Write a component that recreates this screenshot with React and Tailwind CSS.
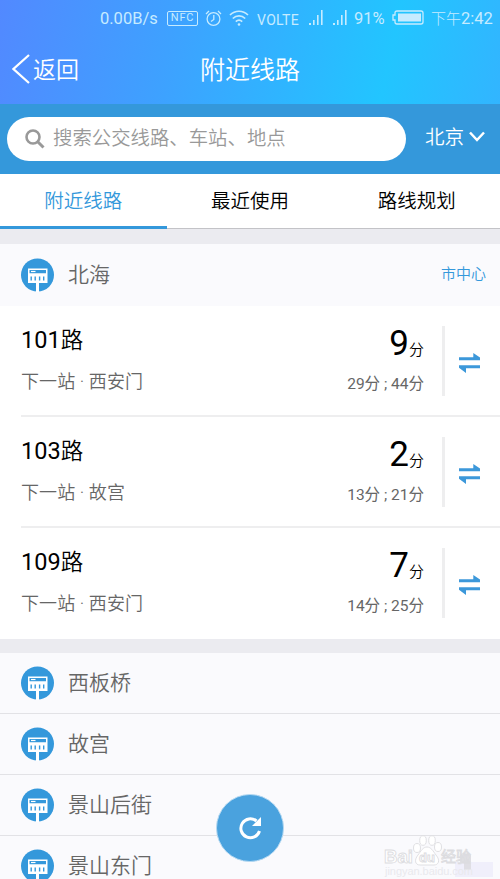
const lines = [
  { number: "101", next: "西安门", minutes: "9", later: "29分 ; 44分" },
  { number: "103", next: "故宫", minutes: "2", later: "13分 ; 21分" },
  { number: "109", next: "西安门", minutes: "7", later: "14分 ; 25分" },
];

const stops = ["西板桥", "故宫", "景山后街", "景山东门"];

function Signal({ className }) {
  return (
    <svg className={className} width="14" height="17" viewBox="0 0 14 17" fill="currentColor">
      <path d="M0 14h2v2H0zM4 11h1.6v5H4zM8 6h1.6v10H8zM12 1h1.6v15H12z" />
    </svg>
  );
}

function StatusBar() {
  return (
    <div className="flex h-9 items-center pl-[100px] font-[Roboto,'Noto_Sans_CJK_SC',sans-serif] text-[#c6ebff]">
      <span className="w-[67px] shrink-0 pt-0.5 text-[16.5px]">0.00B/s</span>
      <span className="flex h-[15px] w-[31px] shrink-0 items-center justify-center rounded-[2px] border border-current text-[11px] tracking-[0.8px]">NFC</span>
      <svg className="ml-[7px] shrink-0" width="17" height="17" viewBox="0 0 17 17" fill="none" stroke="currentColor" strokeWidth="1.3">
        <circle cx="8.5" cy="9" r="6.4" />
        <path d="M8.8 5v4.5L6 11.5M1 4l3-3M16 4l-3-3" />
      </svg>
      <svg className="ml-[7px] shrink-0" width="20" height="17" viewBox="0 0 20 17" fill="none" stroke="currentColor" strokeWidth="1.7">
        <path d="M1 5c5-5 13-5 18 0M3.8 8.5c3.6-3.6 8.8-3.6 12.4 0M6.8 11.7c2-2 4.4-2 6.4 0" />
        <circle cx="10" cy="14.5" r="1.3" fill="currentColor" stroke="none" />
      </svg>
      <span className="ml-2 mt-1 w-[52px] shrink-0 text-[14px] tracking-[0.3px]">VOLTE</span>
      <Signal className="mb-0.5 shrink-0" />
      <Signal className="mb-0.5 ml-[10px] shrink-0" />
      <span className="ml-[7px] w-[38px] shrink-0 pt-0.5 text-[16.5px]">91%</span>
      <svg className="mb-0.5 shrink-0" width="32" height="15" viewBox="0 0 32 15">
        <path d="M5 1h24q2 0 2 2v9q0 2-2 2H5q-2 0-2-2v-2H1V5h2V3q0-2 2-2z" fill="none" stroke="currentColor" strokeWidth="1.3" />
        <path d="M6 3.5h23v8H6z" fill="currentColor" />
      </svg>
      <span className="ml-[7px] shrink-0 whitespace-nowrap pt-0.5 text-[15px] font-light">下午<span className="text-[16.5px] font-normal">2:42</span></span>
    </div>
  );
}

function StopIcon() {
  return (
    <svg className="shrink-0" width="33" height="34" viewBox="0 0 33 34">
      <circle cx="16.5" cy="17" r="16.5" fill="#3498db" />
      <path d="M7 10.5h19.5V25H18v9h-3v-9H7z" fill="#fff" />
      <path d="M8.5 12H25v3.2H8.5zM9.5 18.5h1.4v4H9.5zM13.5 18.5h1.4v4h-1.4zM17.9 18.5h1.4v4h-1.4zM22 18.5h1.4v4H22z" fill="#3498db" />
      <path d="M10 12.9h4.5v1.2H10z" fill="#fff" />
    </svg>
  );
}

function LineRow({ line, last }) {
  return (
    <div className={last ? "ml-[21px] flex h-[111px] justify-between" : "ml-[21px] flex h-[111px] justify-between border-b-2 border-[#eeeeef]"}>
      <div className="font-[Roboto,'Noto_Sans_CJK_SC',sans-serif]">
        <div className="mt-[16px] text-[23.5px] leading-[36px] text-black">
          {line.number}<span className="text-[22.5px] font-[350]">路</span>
        </div>
        <div className="mt-[10px] text-[18px] font-[350] leading-[28px] tracking-[0.1px] text-[#666]">下一站 · {line.next}</div>
      </div>
      <div className="flex font-[Roboto,'Noto_Sans_CJK_SC',sans-serif]">
        <div className="text-right">
          <div className="mt-[16px] flex h-[44px] items-baseline justify-end text-black">
            <span className="text-[35px] leading-[44px]">{line.minutes}</span>
            <span className="text-[15px] font-[350]">分</span>
          </div>
          <div className="mt-[4px] text-[15.5px] leading-[28px] text-[#666]">{line.later}</div>
        </div>
        <div className="ml-[18px] mt-5 h-[70px] w-[3px] bg-[#eeeeef]" />
        <svg className="ml-[14px] mr-[19px] mt-[47px]" width="22" height="20" viewBox="0 0 22 20" fill="#3c98da">
          <path d="M0 4.2h14.3V0L21 4.500v2.700H0zM21 12.300v2.900H7V20L0 14.800v-2.500z" />
        </svg>
      </div>
    </div>
  );
}

function Watermark() {
  return (
    <div className="absolute left-[383px] top-[833px] h-[46px] w-[117px] font-['Liberation_Sans','Noto_Sans_CJK_SC',sans-serif]">
      <svg width="117" height="46" viewBox="0 0 117 46">
        <path d="M72 29h38v15H72z" fill="#f0effb" />
        <path d="M77 22h11v15h-7v-7h-4z" fill="#dfdee4" />
        <g fill="#fff" stroke="#dcdce0" strokeWidth="0.9">
          <text x="1" y="30" fontSize="19" fontWeight="bold" textLength="29" lengthAdjust="spacingAndGlyphs">Bai</text>
          <path d="M35 22c3-4 5-8 9-8s6 4 9 8c5 6 2 10-2 10H37c-5 0-6-5-2-10z" />
          <ellipse cx="34" cy="15" rx="3.5" ry="4.5" />
          <ellipse cx="40" cy="7.5" rx="3.3" ry="4.8" />
          <ellipse cx="49" cy="7.5" rx="3.3" ry="4.8" />
          <ellipse cx="55" cy="14" rx="3.5" ry="4.5" />
          <text x="36" y="29" fontSize="13" fontWeight="bold">du</text>
          <text x="58" y="29" fontSize="15">经验</text>
        </g>
        <text x="2" y="42" fontSize="11" fill="#e9e9ed" textLength="88">jingyan.baidu.com</text>
      </svg>
    </div>
  );
}

export default function App() {
  return (
    <div className="relative h-[879px] w-[500px] overflow-hidden bg-white font-['Noto_Sans_CJK_SC',sans-serif]">
      <div className="h-[104px] bg-linear-[102deg,#5289ff_0%,#3ea1ff_34%,#22c5ff_77%,#32b5ff_100%] text-white">
        <StatusBar />
        <div className="grid h-[68px] grid-cols-3 items-center pb-0.5">
          <div className="flex items-center pl-3 text-[23px] font-[350] leading-none">
            <svg width="18" height="30" viewBox="0 0 18 30" fill="none" stroke="currentColor" strokeWidth="2.2">
              <path d="M17 1 1.5 15 17 29" />
            </svg>
            <span className="ml-[3px] pb-0.5">返回</span>
          </div>
          <h1 className="pb-px text-center text-[25px] font-[350] leading-none">附近线路</h1>
        </div>
      </div>

      <div className="flex h-[70px] items-center bg-[#3498db] text-white">
        <div className="ml-[7px] flex h-[44px] w-[399px] items-center rounded-full bg-white pl-[18px] text-[#999]">
          <svg width="20" height="20" viewBox="0 0 20 20" fill="none" stroke="currentColor" strokeWidth="2.6">
            <circle cx="8" cy="8" r="6.5" />
            <path d="m12.5 12.5 6 6" strokeWidth="3" />
          </svg>
          <span className="ml-2 pb-1 text-[19.4px] font-[350] leading-none">搜索公交线路、车站、地点</span>
        </div>
        <span className="ml-[19px] pb-1.5 text-[19.5px] font-[350] leading-none">北京</span>
        <svg className="mb-1.5 ml-[5px]" width="16" height="11" viewBox="0 0 16 11" fill="none" stroke="currentColor" strokeWidth="2.5">
          <path d="m1 1.500 7 7.500 7-7.500" />
        </svg>
      </div>

      <div className="grid h-[55px] grid-cols-3 text-center text-[19.5px] font-[350] leading-[51px] text-black">
        <div className="border-b-[3px] border-[#3498db] text-[#3498db]">附近线路</div>
        <div className="border-b border-[#c3c3c7]">最近使用</div>
        <div className="border-b border-[#c3c3c7]">路线规划</div>
      </div>
      <div className="h-[15px] bg-[#ebebf0]" />

      <div className="flex h-[62px] items-center bg-[#fafafd] pl-[21px] pr-[14px]">
        <StopIcon />
        <span className="ml-[14px] flex-1 pb-1 text-[21px] font-[350] leading-none text-[#666]">北海</span>
        <span className="pb-1.5 text-[15px] font-[350] leading-none text-[#3498db]">市中心</span>
      </div>
      {lines.map((line, i) => (
        <LineRow key={line.number} line={line} last={i === lines.length - 1} />
      ))}
      <div className="h-[14px] bg-[#ebebf0]" />

      {stops.map((stop) => (
        <div key={stop} className="flex h-[61px] items-center border-b border-[#e2e2e6] bg-[#fafafd] pl-[21px]">
          <StopIcon />
          <span className="ml-[14px] pb-1 text-[21px] font-[350] leading-none text-[#666]">{stop}</span>
        </div>
      ))}

      <button className="absolute left-[216px] top-[794px] flex h-[68px] w-[68px] items-center justify-center rounded-full border border-[#b5d9f2] bg-[#4aa2de]">
        <svg width="24" height="24" viewBox="0 0 24 24" fill="none" stroke="#fff" strokeWidth="3">
          <path d="M18.5 5A9.5 9.5 0 1 0 21.5 15" />
          <path d="M23 1v9h-9z" fill="#fff" stroke="none" />
        </svg>
      </button>
      <Watermark />
    </div>
  );
}
